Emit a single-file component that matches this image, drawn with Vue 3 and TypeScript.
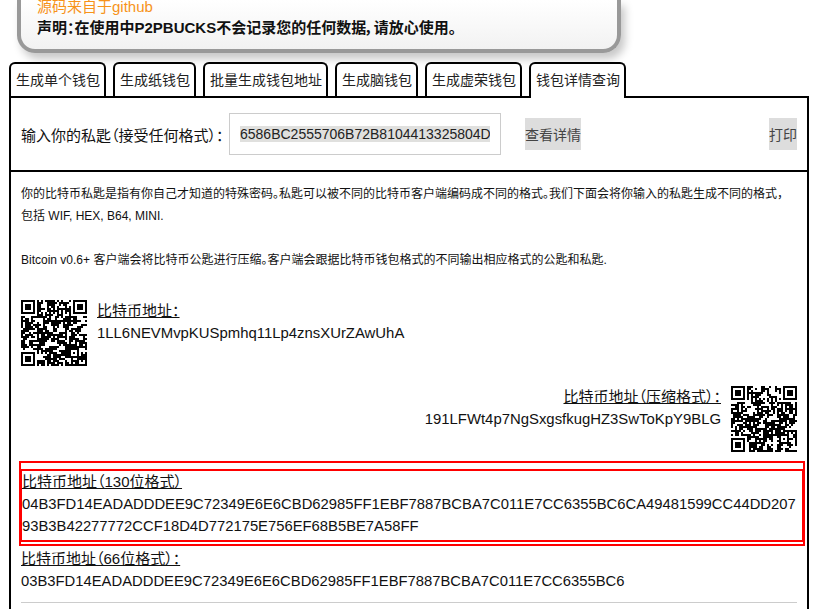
<template>
  <div class="page">
    <div class="notice">
      <a class="srcLink">源码来自于github</a>
      <div class="claim">声明：在使用中P2PBUCKS不会记录您的任何数据，请放心使用。</div>
    </div>

    <div class="tabs">
      <div v-for="t in tabs" :key="t" class="tab" :class="{ active: t === '钱包详情查询' }">{{ t }}</div>
    </div>

    <div class="panel">
      <div class="inputRow">
        <label class="inputLabel">输入你的私匙（接受任何格式）：</label>
        <div class="keyInput"><div class="keyClip"><span class="selected">6586BC2555706B72B8104413325804D4C1A9B6E5F0</span></div></div>
        <button class="btn detail">查看详情</button>
        <button class="btn print">打印</button>
      </div>

      <div class="body">
        <p class="intro">你的比特币私匙是指有你自己才知道的特殊密码。私匙可以被不同的比特币客户端编码成不同的格式。我们下面会将你输入的私匙生成不同的格式，<br />包括 WIF, HEX, B64, MINI.</p>
        <p class="intro second">Bitcoin v0.6+ 客户端会将比特币公匙进行压缩。客户端会跟据比特币钱包格式的不同输出相应格式的公匙和私匙.</p>

        <div class="addrLeft">
          <svg class="qr" viewBox="0 0 33 33" shape-rendering="crispEdges"><path :d="qrA" /></svg>
          <div>
            <div class="addrTitle">比特币地址：</div>
            <div class="addrValue">1LL6NEVMvpKUSpmhq11Lp4znsXUrZAwUhA</div>
          </div>
        </div>

        <div class="addrRight">
          <div class="rightText">
            <div class="addrTitle">比特币地址（压缩格式）：</div>
            <div class="addrValue">191LFWt4p7NgSxgsfkugHZ3SwToKpY9BLG</div>
          </div>
          <svg class="qr" viewBox="0 0 33 33" shape-rendering="crispEdges"><path :d="qrB" /></svg>
        </div>

        <div class="outerMark">
          <div class="innerMark">
            <div class="addrTitle">比特币地址（130位格式）</div>
            <div class="addrValue hex">04B3FD14EADADDDEE9C72349E6E6CBD62985FF1EBF7887BCBA7C011E7CC6355BC6CA49481599CC44DD20793B3B42277772CCF18D4D772175E756EF68B5BE7A58FF</div>
          </div>
        </div>

        <div class="plain">
          <div class="addrTitle">比特币地址（66位格式）：</div>
          <div class="addrValue hex">03B3FD14EADADDDEE9C72349E6E6CBD62985FF1EBF7887BCBA7C011E7CC6355BC6</div>
        </div>
        <hr class="rule" />
      </div>
    </div>
  </div>
</template>

<script setup lang="ts">
const tabs = ['生成单个钱包', '生成纸钱包', '批量生成钱包地址', '生成脑钱包', '生成虚荣钱包', '钱包详情查询']

// not a real encoder, just draws the fixed QR parts and fills the rest with noise
function makeQr(seed: number) {
  const size = 33
  let s = seed
  const rnd = () => {
    s = (s * 1664525 + 1013904223) >>> 0
    return (s >>> 16) % 100
  }
  const inFinder = (x: number, y: number, ox: number, oy: number) => x >= ox - 1 && x <= ox + 7 && y >= oy - 1 && y <= oy + 7
  const finderOn = (x: number, y: number, ox: number, oy: number) => {
    const dx = x - ox
    const dy = y - oy
    if (dx < 0 || dy < 0 || dx > 6 || dy > 6) return false
    return dx === 0 || dy === 0 || dx === 6 || dy === 6 || (dx >= 2 && dx <= 4 && dy >= 2 && dy <= 4)
  }
  const cells: boolean[] = []
  let d = ''
  for (let y = 0; y < size; y++) {
    for (let x = 0; x < size; x++) {
      let on = rnd() < 50
      // copy a neighbour now and then so the noise clumps a bit
      if (x > 0 && y > 0 && rnd() < 40) on = cells[(y - 1) * size + x] || cells[y * size + x - 1]
      if (inFinder(x, y, 0, 0)) on = finderOn(x, y, 0, 0)
      else if (inFinder(x, y, 26, 0)) on = finderOn(x, y, 26, 0)
      else if (inFinder(x, y, 0, 26)) on = finderOn(x, y, 0, 26)
      else if (x >= 24 && x <= 28 && y >= 24 && y <= 28) {
        on = x === 24 || x === 28 || y === 24 || y === 28 || (x === 26 && y === 26)
      } else if (x === 6 || y === 6) on = (x + y) % 2 === 0
      cells.push(on)
      if (on) d += `M${x} ${y}h1v1h-1z`
    }
  }
  return d
}

const qrA = makeQr(17)
const qrB = makeQr(2024)
</script>

<style>
html,
body {
  margin: 0;
  overflow: hidden;
  background: #fff;
}
</style>

<style scoped>
.page {
  height: 609px;
  overflow: hidden;
  font-family: "Liberation Sans", "Noto Sans CJK SC", sans-serif;
  font-size: 14px;
  font-feature-settings: "palt";
  color: #000;
}

.notice {
  box-sizing: border-box;
  width: 604px;
  height: 53px;
  margin-left: 17px;
  padding: 0 16px;
  border: 4px solid #999;
  border-top: 0;
  border-radius: 0 0 18px 18px;
  background: linear-gradient(#fff, #f2f2f2);
  box-shadow: 4px 6px 8px rgba(0, 0, 0, 0.22);
}

.srcLink {
  display: block;
  height: 20px;
  font-size: 15px;
  line-height: 14px;
  color: #f7931a;
}

.claim {
  font-size: 15px;
  line-height: 16px;
  font-weight: 700;
  color: #111;
}

.tabs {
  display: flex;
  gap: 7px;
  margin: 9px 0 0 9px;
  height: 34px;
}

.tab {
  box-sizing: border-box;
  height: 34px;
  padding: 0 4px 0 5px;
  border: 2px solid #000;
  border-bottom: 0;
  border-radius: 6px 6px 0 0;
  background: #fff;
  line-height: 33px;
  white-space: nowrap;
  color: #222;
}

.tab.active {
  position: relative;
  z-index: 1;
  height: 36px;
}

.panel {
  box-sizing: border-box;
  width: 800px;
  margin-left: 9px;
  border: 2px solid #000;
}

.inputRow {
  display: flex;
  align-items: center;
  height: 72px;
  padding: 0 10px;
  border-bottom: 2px solid #000;
}

.inputLabel {
  flex: none;
  width: 208px;
  font-size: 15px;
  white-space: nowrap;
  color: #111;
}

.keyInput {
  flex: none;
  box-sizing: border-box;
  width: 272px;
  height: 42px;
  padding: 0 10px;
  border: 1px solid #ccc;
  line-height: 40px;
  color: #222;
}

.keyClip {
  width: 250px;
  overflow: hidden;
  white-space: nowrap;
}

.selected {
  background: #e0e0de;
}

.btn {
  height: 32px;
  padding: 0;
  border: 0;
  background: #ddd;
  font: inherit;
  font-feature-settings: inherit;
  color: #444;
}

.detail {
  width: 56px;
  margin-left: 24px;
}

.print {
  width: 28px;
  margin-left: auto;
}

.body {
  padding: 11px 10px 40px;
}

.intro {
  margin: 0;
  font-size: 12px;
  font-feature-settings: "halt";
  line-height: 22px;
  color: #111;
}

.second {
  margin-top: 22px;
}

.addrLeft,
.addrRight {
  display: flex;
  gap: 10px;
}

.addrLeft {
  margin-top: 29px;
}

.addrRight {
  justify-content: flex-end;
  margin-top: 20px;
}

.rightText {
  text-align: right;
}

.qr {
  display: block;
  width: 66px;
  height: 66px;
  flex: none;
}

.addrTitle {
  font-size: 15px;
  line-height: 22px;
  text-decoration: underline;
  color: #111;
}

.addrValue {
  font-size: 14.9px;
  line-height: 22px;
  color: #111;
}

.hex {
  font-size: 14.8px;
  word-break: break-all;
}

.outerMark {
  width: 786px;
  margin: 9px 0 0 -2px;
  box-sizing: border-box;
  border: 2px solid #f00;
}

.innerMark {
  margin: 6px -1px 2px;
  padding: 0 0 3px 0;
  border: 2px solid #f00;
}

.plain {
  margin-top: 2px;
}

.rule {
  height: 0;
  margin: 10px 0 0;
  border: 0;
  border-top: 1px solid #ccc;
}
</style>
